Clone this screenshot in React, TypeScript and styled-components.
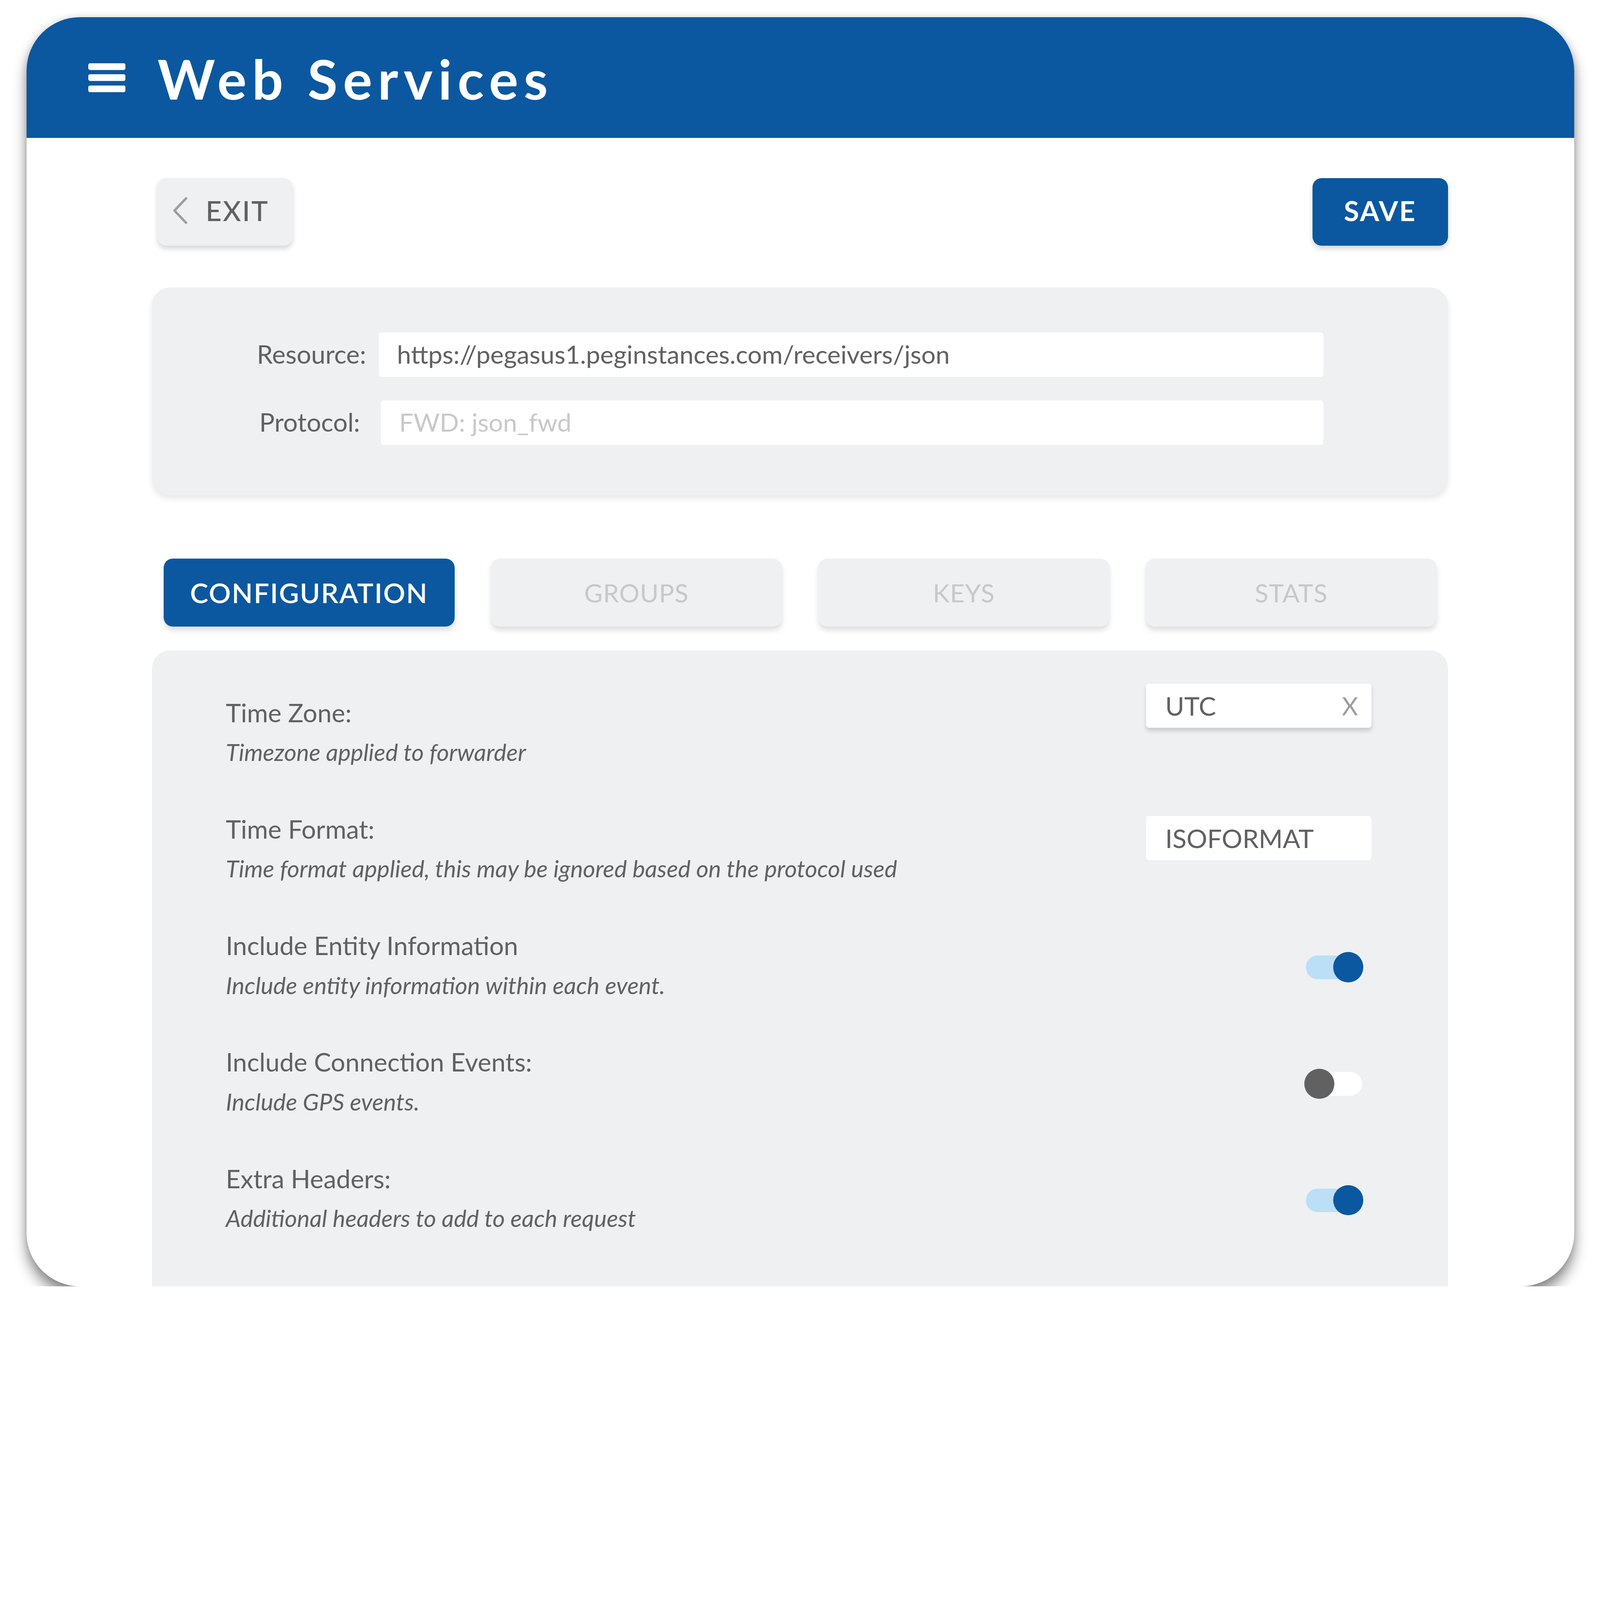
import React, { useEffect, useState } from 'react';
import styled, { createGlobalStyle } from 'styled-components';

const BLUE = '#0b58a0';
const PANEL = '#eff0f2';
const INK = '#616161';
const DESIGN_WIDTH = 5251;

const GlobalStyle = createGlobalStyle`
  body {
    margin: 0;
    background: #ffffff;
    font-family: Lato, "Open Sans", "Liberation Sans", sans-serif;
  }
`;

const Page = styled.div`
  width: 5251px;
  padding: 57px 0 0 87px;
  box-sizing: border-box;
`;

const Card = styled.div`
  width: 5080px;
  height: 4165px;
  border-radius: 175px;
  overflow: hidden;
  background: #ffffff;
  box-shadow: 0 32px 45px rgba(0, 0, 0, 0.45), 0 0 24px rgba(0, 0, 0, 0.12);
`;

const Header = styled.header`
  height: 396px;
  background: ${BLUE};
  display: flex;
  align-items: center;
  gap: 105px;
  padding-left: 203px;
`;

const Title = styled.h1`
  margin: 0;
  color: #ffffff;
  font-size: 180px;
  font-weight: 700;
  letter-spacing: 18px;
  line-height: 1;
  padding-top: 6px;
`;

const Body = styled.div`
  padding: 131px 415px 0 412px;
  display: flex;
  flex-direction: column;
`;

const TopBar = styled.div`
  display: flex;
  justify-content: space-between;
  align-items: center;
  padding-left: 18px;
`;

const ActionButton = styled.button<{ $primary?: boolean }>`
  height: 222px;
  width: ${p => (p.$primary ? '445px' : '443px')};
  border: none;
  border-radius: 30px;
  display: flex;
  align-items: center;
  justify-content: ${p => (p.$primary ? 'center' : 'flex-start')};
  gap: 58px;
  padding: ${p => (p.$primary ? '0 0 8px' : '0 0 8px 50px')};
  font-family: inherit;
  font-size: 91px;
  font-weight: ${p => (p.$primary ? 700 : 500)};
  letter-spacing: 4px;
  color: ${p => (p.$primary ? '#ffffff' : INK)};
  background: ${p => (p.$primary ? BLUE : PANEL)};
  box-shadow: 0 10px 16px rgba(0, 0, 0, 0.16);
`;

const FormPanel = styled.section`
  margin-top: 137px;
  height: 681px;
  box-sizing: border-box;
  padding: 148px 0 0 344px;
  background: ${PANEL};
  border-radius: 60px;
  box-shadow: 0 12px 20px rgba(0, 0, 0, 0.09);
  display: grid;
  grid-template-columns: 358px 3101px;
  column-gap: 42px;
  row-gap: 77px;
  align-content: start;
  align-items: center;
`;

const FormLabel = styled.label<{ $indent?: number }>`
  font-size: 84px;
  color: ${INK};
  padding: 0 0 6px ${p => p.$indent ?? 0}px;
`;

const TextBox = styled.div<{ $muted?: boolean; $indent?: number }>`
  height: 146px;
  box-sizing: border-box;
  background: #ffffff;
  border-radius: 10px;
  display: flex;
  align-items: center;
  margin-left: ${p => p.$indent ?? 0}px;
  padding: 0 0 6px 60px;
  font-size: 83px;
  color: ${p => (p.$muted ? '#c8c8c8' : INK)};
`;

const Tabs = styled.nav`
  margin-top: 209px;
  display: flex;
  justify-content: space-between;
  padding: 0 37px 0 38px;
`;

const Tab = styled.div<{ $active?: boolean }>`
  width: 955px;
  height: 223px;
  border-radius: 30px;
  display: flex;
  align-items: center;
  justify-content: center;
  font-size: ${p => (p.$active ? '90px' : '83px')};
  letter-spacing: ${p => (p.$active ? '3px' : '1.5px')};
  font-weight: ${p => (p.$active ? 600 : 400)};
  color: ${p => (p.$active ? '#ffffff' : '#c8c8c8')};
  background: ${p => (p.$active ? BLUE : PANEL)};
  box-shadow: 0 12px 18px rgba(0, 0, 0, 0.13);
`;

const ConfigPanel = styled.section`
  margin-top: 78px;
  padding: 154px 251px 400px 242px;
  background: ${PANEL};
  border-radius: 60px;
  display: flex;
  flex-direction: column;
  gap: 156px;
`;

const Row = styled.div`
  display: flex;
  justify-content: space-between;
  align-items: center;
`;

const RowText = styled.div`
  display: flex;
  flex-direction: column;
  gap: 32px;
`;

const RowLabel = styled.div`
  font-size: 84px;
  line-height: 1.2;
  color: ${INK};
`;

const RowHint = styled.div`
  font-size: 78px;
  line-height: 1.2;
  font-style: italic;
  color: ${INK};
`;

const Field = styled.div<{ $raised?: boolean; $offset: number }>`
  align-self: flex-start;
  margin-top: ${p => p.$offset}px;
  width: 740px;
  height: 145px;
  box-sizing: border-box;
  padding: 0 44px 0 63px;
  background: #ffffff;
  border-radius: 10px;
  display: flex;
  align-items: center;
  justify-content: space-between;
  font-size: 85px;
  color: ${INK};
  box-shadow: ${p => (p.$raised ? '0 10px 14px rgba(0, 0, 0, 0.16)' : 'none')};
`;

const Clear = styled.span`
  color: #9e9e9e;
  font-size: 82px;
`;

const Track = styled.span<{ $on: boolean }>`
  position: relative;
  width: 185px;
  height: 78px;
  margin: 18px 31px 0 0;
  border-radius: 39px;
  background: ${p => (p.$on ? '#bbdff7' : '#ffffff')};
`;

const Knob = styled.span<{ $on: boolean }>`
  position: absolute;
  top: -11px;
  width: 99px;
  height: 99px;
  border-radius: 50%;
  left: ${p => (p.$on ? '90px' : '-5px')};
  background: ${p => (p.$on ? BLUE : INK)};
`;

function MenuIcon() {
  return (
    <svg width="122" height="95" viewBox="0 0 122 95">
      <rect x="0" y="0" width="122" height="22" rx="6" fill="#ffffff" />
      <rect x="0" y="36" width="122" height="22" rx="6" fill="#ffffff" />
      <rect x="0" y="73" width="122" height="22" rx="6" fill="#ffffff" />
    </svg>
  );
}

function BackChevron() {
  return (
    <svg width="50" height="90" viewBox="0 0 50 90">
      <polyline
        points="44,5 6,45 44,85"
        fill="none"
        stroke="#9e9e9e"
        strokeWidth="8"
        strokeLinecap="round"
        strokeLinejoin="round"
      />
    </svg>
  );
}

function Toggle({ on }: { on: boolean }) {
  return (
    <Track $on={on}>
      <Knob $on={on} />
    </Track>
  );
}

// the mockup is drawn at 5251px wide; fit it to whatever the viewport really is
function useFit() {
  const read = () => (typeof window === 'undefined' ? 1 : window.innerWidth / DESIGN_WIDTH);
  const [scale, setScale] = useState(read);
  useEffect(() => {
    const onResize = () => setScale(read());
    window.addEventListener('resize', onResize);
    return () => window.removeEventListener('resize', onResize);
  }, []);
  return scale;
}

const tabs = ['CONFIGURATION', 'GROUPS', 'KEYS', 'STATS'];

export default function App() {
  const scale = useFit();
  return (
    <Page style={{ zoom: scale }}>
      <GlobalStyle />
      <Card>
        <Header>
          <MenuIcon />
          <Title>Web Services</Title>
        </Header>
        <Body>
          <TopBar>
            <ActionButton>
              <BackChevron />
              EXIT
            </ActionButton>
            <ActionButton $primary>SAVE</ActionButton>
          </TopBar>

          <FormPanel>
            <FormLabel>Resource:</FormLabel>
            <TextBox>https://pegasus1.peginstances.com/receivers/json</TextBox>
            <FormLabel $indent={8}>Protocol:</FormLabel>
            <TextBox $muted $indent={7}>FWD: json_fwd</TextBox>
          </FormPanel>

          <Tabs>
            {tabs.map((t, i) => (
              <Tab key={t} $active={i === 0}>{t}</Tab>
            ))}
          </Tabs>

          <ConfigPanel>
            <Row>
              <RowText>
                <RowLabel>Time Zone:</RowLabel>
                <RowHint>Timezone applied to forwarder</RowHint>
              </RowText>
              <Field $raised $offset={-44}>
                UTC
                <Clear>X</Clear>
              </Field>
            </Row>
            <Row>
              <RowText>
                <RowLabel>Time Format:</RowLabel>
                <RowHint>Time format applied, this may be ignored based on the protocol used</RowHint>
              </RowText>
              <Field $offset={8}>ISOFORMAT</Field>
            </Row>
            <Row>
              <RowText>
                <RowLabel>Include Entity Information</RowLabel>
                <RowHint>Include entity information within each event.</RowHint>
              </RowText>
              <Toggle on />
            </Row>
            <Row>
              <RowText>
                <RowLabel>Include Connection Events:</RowLabel>
                <RowHint>Include GPS events.</RowHint>
              </RowText>
              <Toggle on={false} />
            </Row>
            <Row>
              <RowText>
                <RowLabel>Extra Headers:</RowLabel>
                <RowHint>Additional headers to add to each request</RowHint>
              </RowText>
              <Toggle on />
            </Row>
          </ConfigPanel>
        </Body>
      </Card>
    </Page>
  );
}
